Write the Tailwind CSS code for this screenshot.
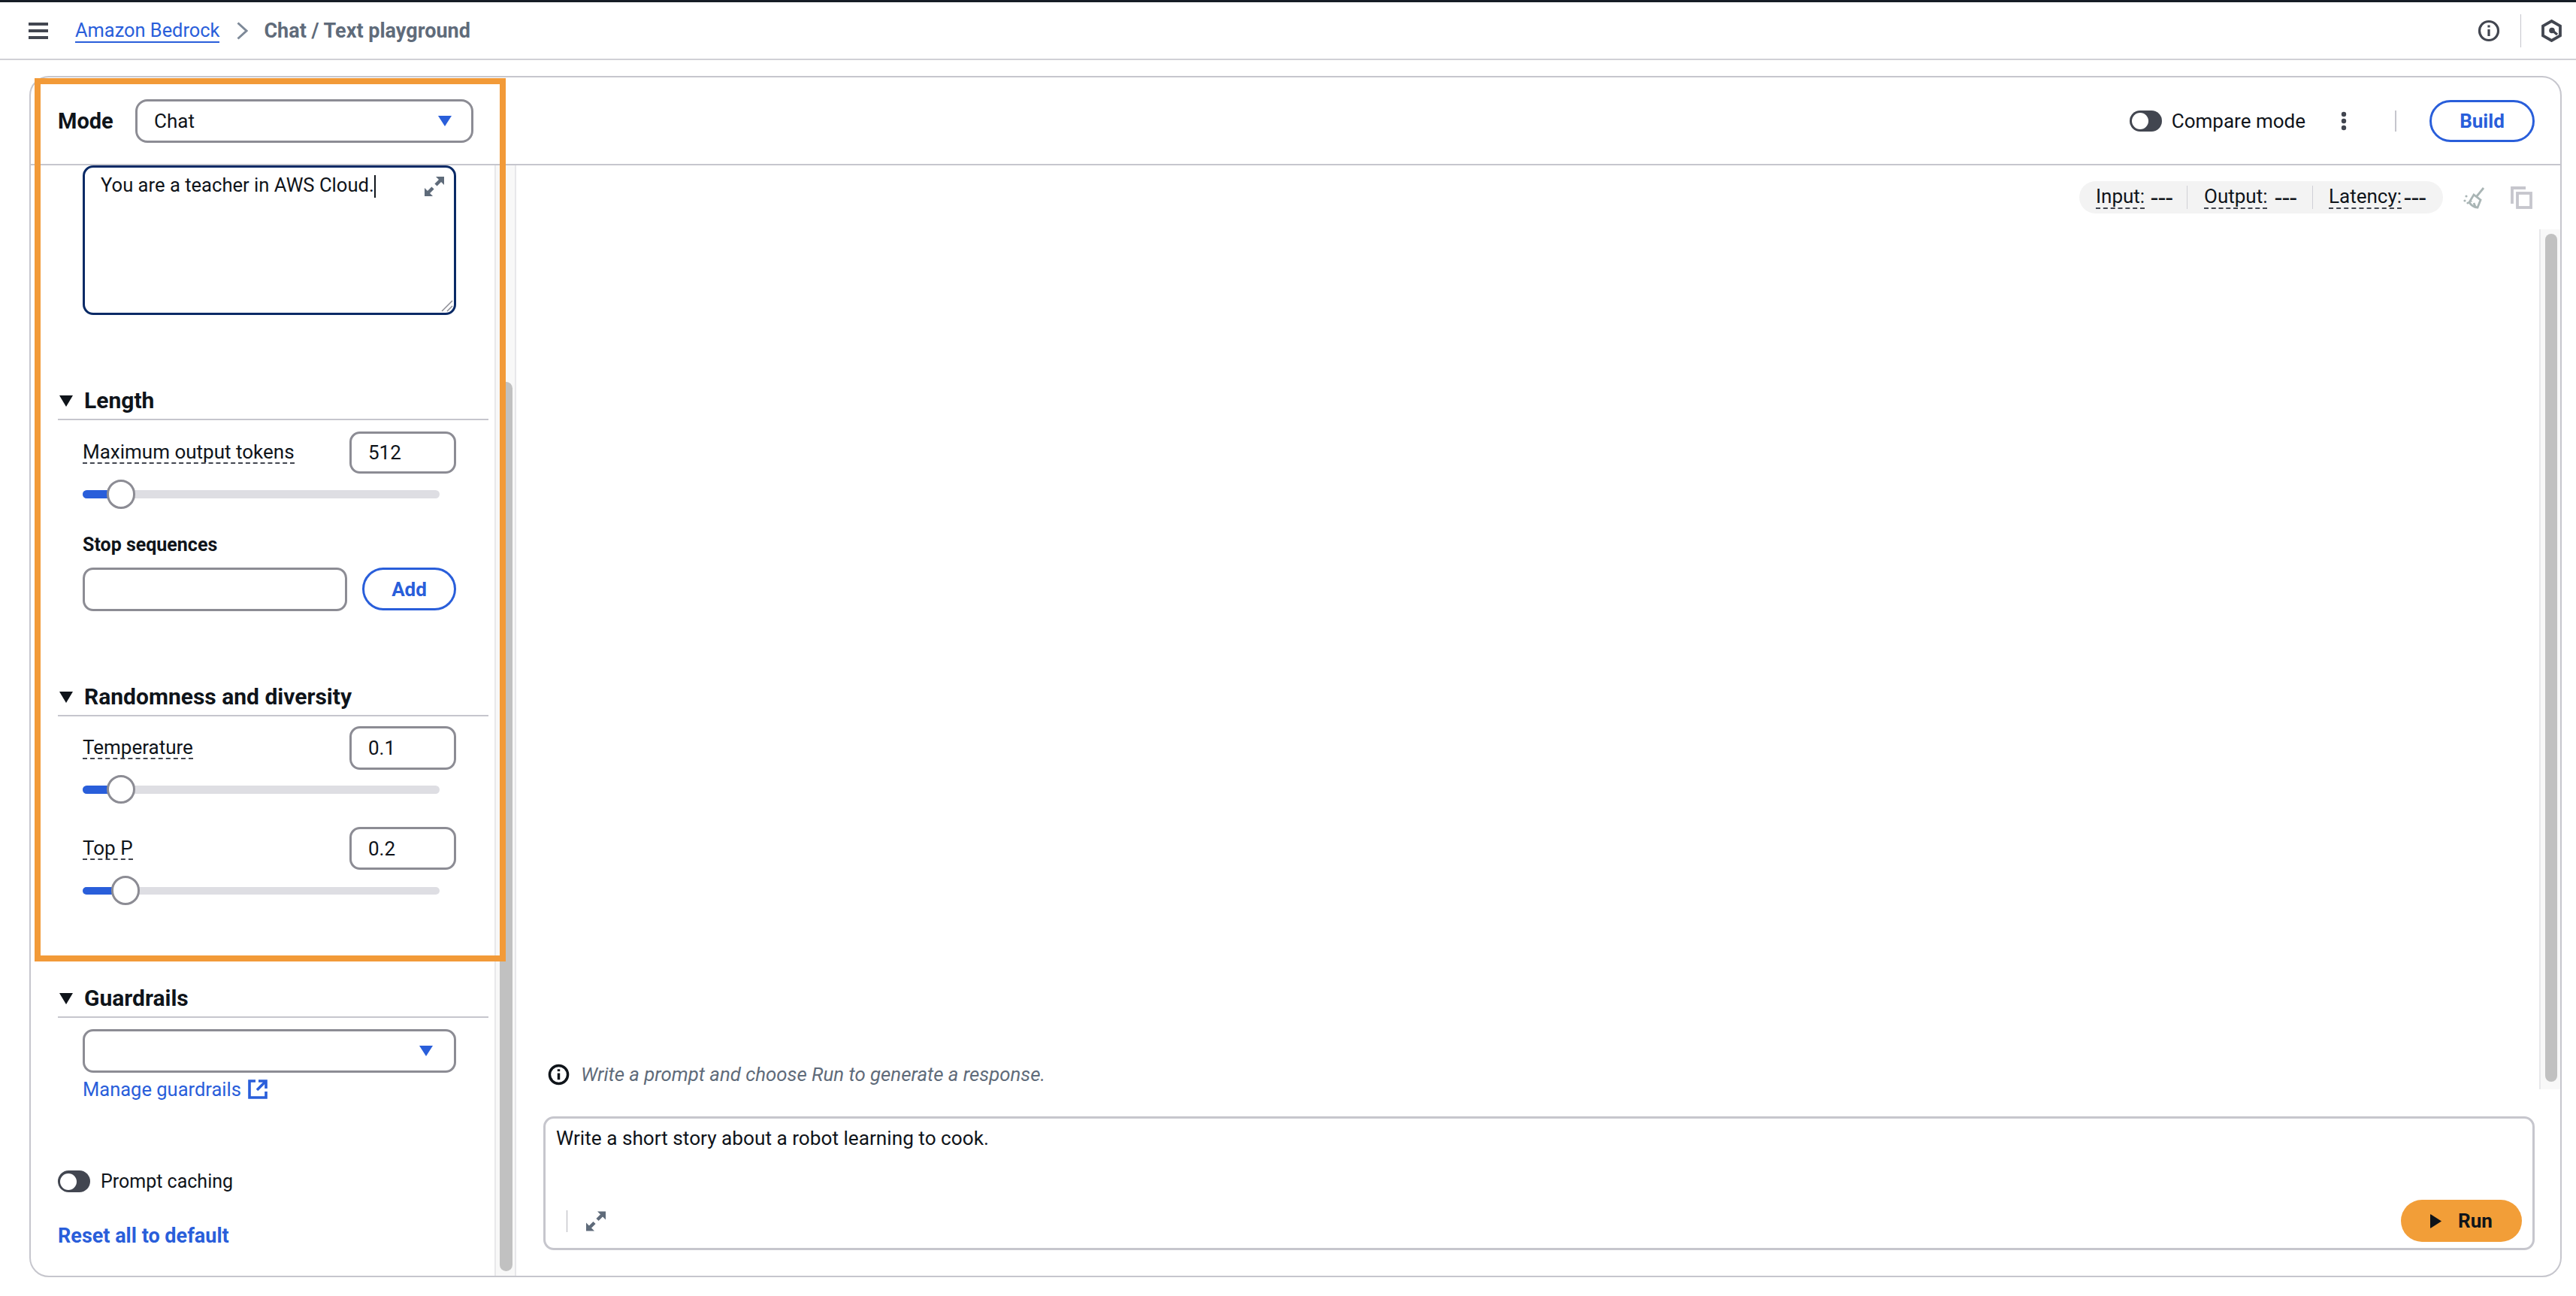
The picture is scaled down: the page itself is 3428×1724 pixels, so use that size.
<!DOCTYPE html>
<html lang="en">
<head>
<meta charset="utf-8">
<title>Chat / Text playground</title>
<script src="https://cdn.jsdelivr.net/npm/@tailwindcss/browser@4"></script>
</head>
<body class="bg-white">
<div class="relative w-[3428px] h-[1724px] overflow-hidden flex flex-col bg-white text-[#0f141a] text-[26px] leading-[30px] font-[family-name:Roboto,sans-serif]">
  <div class="h-[3px] bg-[#161d26] shrink-0"></div>
  <header class="h-[77px] shrink-0 border-b-2 border-[#d0d0d6] flex items-center relative">
    <svg class="ml-[38px] w-[26px] h-[22px] shrink-0" viewBox="0 0 26 22" fill="#424650"><rect width="26" height="4" y="0"/><rect width="26" height="4" y="9"/><rect width="26" height="4" y="18"/></svg>
    <a class="ml-[36px] text-[25.4px] text-[#295eda] border-b-[2px] border-[#295eda] leading-[30px]">Amazon Bedrock</a>
    <svg class="ml-[23px] w-[15px] h-[24px] shrink-0" viewBox="0 0 15 24" fill="none" stroke="#7d8998" stroke-width="3"><path d="M1.5 1.5 13 12 1.500 22.500"/></svg>
    <span class="ml-[21px] text-[27px] font-bold text-[#5f6b7a]">Chat / Text playground</span>
    <div class="ml-auto flex items-center pr-[19px]">
      <svg class="w-[30px] h-[30px]" viewBox="0 0 30 30" fill="none" stroke="#424650" stroke-width="3.200"><circle cx="15" cy="15" r="12.500"/><path d="M15 13v9"/><path d="M15 7.500v3"/></svg>
      <div class="ml-[27px] w-[1px] h-[44px] bg-[#c6c6cd]"></div>
      <svg class="ml-[27px] w-[27px] h-[30px]" viewBox="0 0 27 30" fill="none" stroke="#424650" stroke-width="3.800"><path d="M13.500 2 25 8.500v13L13.500 28 2 21.500v-13z"/><circle cx="14" cy="14.500" r="3.800" fill="#424650" stroke="none"/><path d="M15 15l6 5" stroke-width="3.400"/></svg>
    </div>
  </header>

  <main class="mt-[21px] ml-[39px] w-[3370px] h-[1598px] border-2 border-[#c6c6cd] rounded-[26px] flex flex-col overflow-hidden bg-white">
    <div class="h-[117px] shrink-0 border-b-2 border-[#c6c6cd] flex items-center pl-[36px] pr-[34px]">
      <span class="font-bold text-[29px] w-[103px]">Mode</span>
      <div class="w-[450px] h-[58px] border-[3px] border-[#8c8c94] rounded-[16px] flex items-center justify-between pl-[22px] pr-[26px]">
        <span>Chat</span>
        <svg class="w-[18px] h-[14px]" viewBox="0 0 18 14" fill="#295eda"><path d="M0 0h18L9 14z"/></svg>
      </div>
      <div class="ml-auto flex items-center">
        <div class="w-[43px] h-[28px] rounded-full bg-[#424650] flex items-center pl-[3px]"><div class="w-[22px] h-[22px] rounded-full bg-white"></div></div>
        <span class="ml-[13px]">Compare mode</span>
        <svg class="ml-[47px] w-[8px] h-[26px]" viewBox="0 0 8 26" fill="#424650"><circle cx="4" cy="4" r="3.200"/><circle cx="4" cy="13" r="3.200"/><circle cx="4" cy="22" r="3.200"/></svg>
        <div class="ml-[64px] w-[2px] h-[28px] bg-[#c6c6cd]"></div>
        <button class="ml-[44px] w-[140px] h-[56px] rounded-full border-[3px] border-[#295eda] text-[#295eda] font-bold text-[26px]">Build</button>
      </div>
    </div>

    <div class="flex flex-1 min-h-0">
      <!-- left pane -->
      <aside class="w-[617px] shrink-0 pl-[36px] pr-[8px] overflow-hidden">
        <div class="ml-[33px] w-[497px] h-[199px] border-[3px] border-[#0a2a66] rounded-[14px] relative pl-[21px] pt-[8px]">
          <span class="text-[25.6px]">You are a teacher in AWS Cloud.</span><span class="inline-block w-[2px] h-[30px] bg-[#0f141a] align-middle"></span>
          <svg class="absolute right-[12px] top-[11px] w-[28px] h-[28px]" viewBox="0 0 28 28" fill="#5f6b7a" stroke="#5f6b7a"><path d="M16 1h11v11z" stroke="none"/><path d="M1 27V16l11 11z" stroke="none"/><path d="M22 6l-6 6M12 16l-6 6" stroke-width="4.500" fill="none"/></svg>
          <svg class="absolute right-[1px] bottom-[1px] w-[16px] h-[16px]" viewBox="0 0 16 16" fill="none" stroke="#8c8c94" stroke-width="1.500"><path d="M15 1 1 15M15 8l-7 7"/></svg>
        </div>

        <div class="mt-[92px] h-[48px] pb-[2px] border-b-2 border-[#c6c6cd] flex items-center">
          <svg class="ml-[2px] w-[18px] h-[15px]" viewBox="0 0 18 15" fill="#0f141a"><path d="M0 0h18L9 15z"/></svg>
          <h2 class="ml-[15px] font-bold text-[30px]">Length</h2>
        </div>

        <div class="ml-[33px] w-[497px]">
          <div class="mt-[15px] h-[56px] flex items-center justify-between">
            <span class="border-b-2 border-dashed border-[#424650] leading-[28px]">Maximum output tokens</span>
            <div class="w-[142px] h-[56px] border-[3px] border-[#8c8c94] rounded-[14px] flex items-center pl-[22px]">512</div>
          </div>
          <div class="mt-[8px] h-[39px] w-[475px] relative flex items-center">
            <div class="w-full h-[11px] rounded-full bg-[#dedee3] overflow-hidden"><div class="w-[34px] h-full bg-[#295eda]"></div></div>
            <div class="absolute left-[32px] top-0 w-[38px] h-[39px] rounded-full bg-white border-[3px] border-[#8c8c94]"></div>
          </div>
          <div class="mt-[33px] font-bold text-[25px]">Stop sequences</div>
          <div class="mt-[15px] flex justify-between">
            <div class="w-[352px] h-[58px] border-[3px] border-[#8c8c94] rounded-[14px]"></div>
            <button class="w-[125px] h-[57px] rounded-full border-[3px] border-[#295eda] text-[#295eda] font-bold">Add</button>
          </div>
        </div>

        <div class="mt-[92px] h-[48px] pb-[2px] border-b-2 border-[#c6c6cd] flex items-center">
          <svg class="ml-[2px] w-[18px] h-[15px]" viewBox="0 0 18 15" fill="#0f141a"><path d="M0 0h18L9 15z"/></svg>
          <h2 class="ml-[15px] font-bold text-[30px]">Randomness and diversity</h2>
        </div>

        <div class="ml-[33px] w-[497px]">
          <div class="mt-[13px] h-[58px] flex items-center justify-between">
            <span class="border-b-2 border-dashed border-[#424650] leading-[28px]">Temperature</span>
            <div class="w-[142px] h-[58px] border-[3px] border-[#8c8c94] rounded-[14px] flex items-center pl-[22px]">0.1</div>
          </div>
          <div class="mt-[7px] h-[38px] w-[475px] relative flex items-center">
            <div class="w-full h-[11px] rounded-full bg-[#dedee3] overflow-hidden"><div class="w-[34px] h-full bg-[#295eda]"></div></div>
            <div class="absolute left-[32px] top-0 w-[38px] h-[38px] rounded-full bg-white border-[3px] border-[#8c8c94]"></div>
          </div>
          <div class="mt-[31px] h-[57px] flex items-center justify-between">
            <span class="border-b-2 border-dashed border-[#424650] leading-[28px]">Top P</span>
            <div class="w-[142px] h-[57px] border-[3px] border-[#8c8c94] rounded-[14px] flex items-center pl-[22px]">0.2</div>
          </div>
          <div class="mt-[8px] h-[39px] w-[475px] relative flex items-center">
            <div class="w-full h-[10px] rounded-full bg-[#dedee3] overflow-hidden"><div class="w-[40px] h-full bg-[#295eda]"></div></div>
            <div class="absolute left-[38px] top-0 w-[38px] h-[39px] rounded-full bg-white border-[3px] border-[#8c8c94]"></div>
          </div>
        </div>

        <div class="mt-[102px] h-[48px] pb-[2px] border-b-2 border-[#c6c6cd] flex items-center">
          <svg class="ml-[2px] w-[18px] h-[15px]" viewBox="0 0 18 15" fill="#0f141a"><path d="M0 0h18L9 15z"/></svg>
          <h2 class="ml-[15px] font-bold text-[30px]">Guardrails</h2>
        </div>

        <div class="ml-[33px] w-[497px]">
          <div class="mt-[15px] h-[58px] border-[3px] border-[#8c8c94] rounded-[14px] flex items-center justify-end pr-[28px]">
            <svg class="w-[18px] h-[14px]" viewBox="0 0 18 14" fill="#295eda"><path d="M0 0h18L9 14z"/></svg>
          </div>
          <div class="mt-[7px] h-[30px] flex items-center text-[#295eda]">
            <span class="text-[25.5px]">Manage guardrails</span>
            <svg class="ml-[9px] w-[26px] h-[26px]" viewBox="0 0 26 26" fill="none" stroke="#295eda" stroke-width="3.600"><path d="M10 2H2v22h22v-8"/><path d="M14 2h10v10"/><path d="M23 3 12 14"/></svg>
          </div>
        </div>

        <div class="mt-[93px] h-[29px] flex items-center">
          <div class="w-[43px] h-[29px] rounded-full bg-[#424650] flex items-center pl-[3px]"><div class="w-[22px] h-[22px] rounded-full bg-white"></div></div>
          <span class="ml-[14px] text-[25px]">Prompt caching</span>
        </div>
        <div class="mt-[43px] font-bold text-[27px] text-[#295eda]">Reset all to default</div>
      </aside>

      <!-- left pane scrollbar -->
      <div class="w-[29px] shrink-0 bg-[#f8f8f8] border-x-2 border-[#e8e8ea] relative">
        <div class="absolute left-[5px] top-[288px] bottom-[6px] w-[17px] rounded-full bg-[#c1c1c1]"></div>
      </div>

      <!-- right pane -->
      <section class="flex-1 min-w-0 flex flex-col">
        <div class="h-[85px] shrink-0 flex justify-end items-start pt-[21px] pr-[37px]">
          <div class="h-[43px] rounded-full bg-[#f3f3f3] flex items-center pl-[22px] pr-[22px]">
            <span class="w-[103px] whitespace-nowrap flex justify-between"><span class="border-b-2 border-dashed border-[#424650] leading-[26px] inline-block">Input:</span><span class="text-[34px] leading-[30px] tracking-[0.5px]">---</span></span>
            <div class="ml-[18px] mr-[22px] w-[1px] h-[31px] bg-[#d0d0d6]"></div>
            <span class="w-[124px] whitespace-nowrap flex justify-between"><span class="border-b-2 border-dashed border-[#424650] leading-[26px] inline-block">Output:</span><span class="text-[34px] leading-[30px] tracking-[0.5px]">---</span></span>
            <div class="ml-[20px] mr-[21px] w-[1px] h-[31px] bg-[#d0d0d6]"></div>
            <span class="w-[130px] whitespace-nowrap flex justify-between"><span class="border-b-2 border-dashed border-[#424650] leading-[26px] inline-block">Latency:</span><span class="text-[34px] leading-[30px] tracking-[0.5px]">---</span></span>
          </div>
          <svg class="ml-[27px] mt-[7px] w-[29px] h-[30px]" viewBox="0 0 29 30" fill="none" stroke="#a9b5b5" stroke-width="2.800"><path d="M27 2 18 13"/><path d="M14 11l9 7-4 10c-4 0-9-3-11-7z" fill="#ffffff"/><path d="M14 22l2 5M11 19l-1 1"/><circle cx="4" cy="13" r="1.600" fill="#a9b5b5" stroke="none"/><circle cx="2" cy="19" r="1.600" fill="#a9b5b5" stroke="none"/><circle cx="6" cy="22" r="1.600" fill="#a9b5b5" stroke="none"/></svg>
          <svg class="ml-[34px] mt-[7px] w-[29px] h-[30px]" viewBox="0 0 29 30" fill="none" stroke="#c6c6cd" stroke-width="3.800"><path d="M20 2H2v21"/><rect x="9" y="9" width="18" height="19"/></svg>
        </div>

        <div class="h-[1144px] shrink-0 flex">
          <div class="flex-1 flex items-end pl-[42px] pb-[5px]">
            <div class="flex items-center">
              <svg class="w-[29px] h-[29px]" viewBox="0 0 30 30" fill="none" stroke="#0f141a" stroke-width="3.600"><circle cx="15" cy="15" r="12.500"/><path d="M15 13v9"/><path d="M15 7.500v3"/></svg>
              <span class="ml-[15px] italic text-[#5f6b7a] text-[25.8px]">Write a prompt and choose Run to generate a response.</span>
            </div>
          </div>
          <div class="w-[28px] shrink-0 bg-[#f8f8f8] border-l-2 border-[#e8e8ea] relative">
            <div class="absolute left-[6px] top-[6px] bottom-[10px] w-[16px] rounded-full bg-[#c1c1c1]"></div>
          </div>
        </div>

        <div class="mt-[36px] ml-[36px] mr-[34px] h-[178px] border-[3px] border-[#c6c6cd] rounded-[14px] flex flex-col justify-between">
          <div class="pl-[14px] pt-[11px] text-[26.2px]">Write a short story about a robot learning to cook.</div>
          <div class="flex items-center justify-between pl-[28px] pr-[14px] pb-[8px]">
            <div class="flex items-center">
              <div class="w-[1px] h-[29px] bg-[#b4b4bb]"></div>
              <svg class="ml-[24px] w-[28px] h-[29px]" viewBox="0 0 28 28" fill="#5f6b7a" stroke="#5f6b7a"><path d="M16 1h11v11z" stroke="none"/><path d="M1 27V16l11 11z" stroke="none"/><path d="M22 6l-6 6M12 16l-6 6" stroke-width="4.500" fill="none"/></svg>
            </div>
            <button class="w-[161px] h-[56px] rounded-full bg-[#f29e38] flex items-center pl-[39px] font-bold text-[#0f141a]">
              <svg class="w-[15px] h-[19px]" viewBox="0 0 15 19" fill="#0f141a"><path d="M0 1q0-1 1-.5L15 9.500 1 18.500q-1 .5-1-.5z"/></svg>
              <span class="ml-[22px]">Run</span>
            </button>
          </div>
        </div>
      </section>
    </div>
  </main>

  <!-- annotation rectangle -->
  <div class="absolute left-[46px] top-[104px] w-[627px] h-[1175px] border-[8px] border-[#f29a38] pointer-events-none"></div>
</div>
</body>
</html>
